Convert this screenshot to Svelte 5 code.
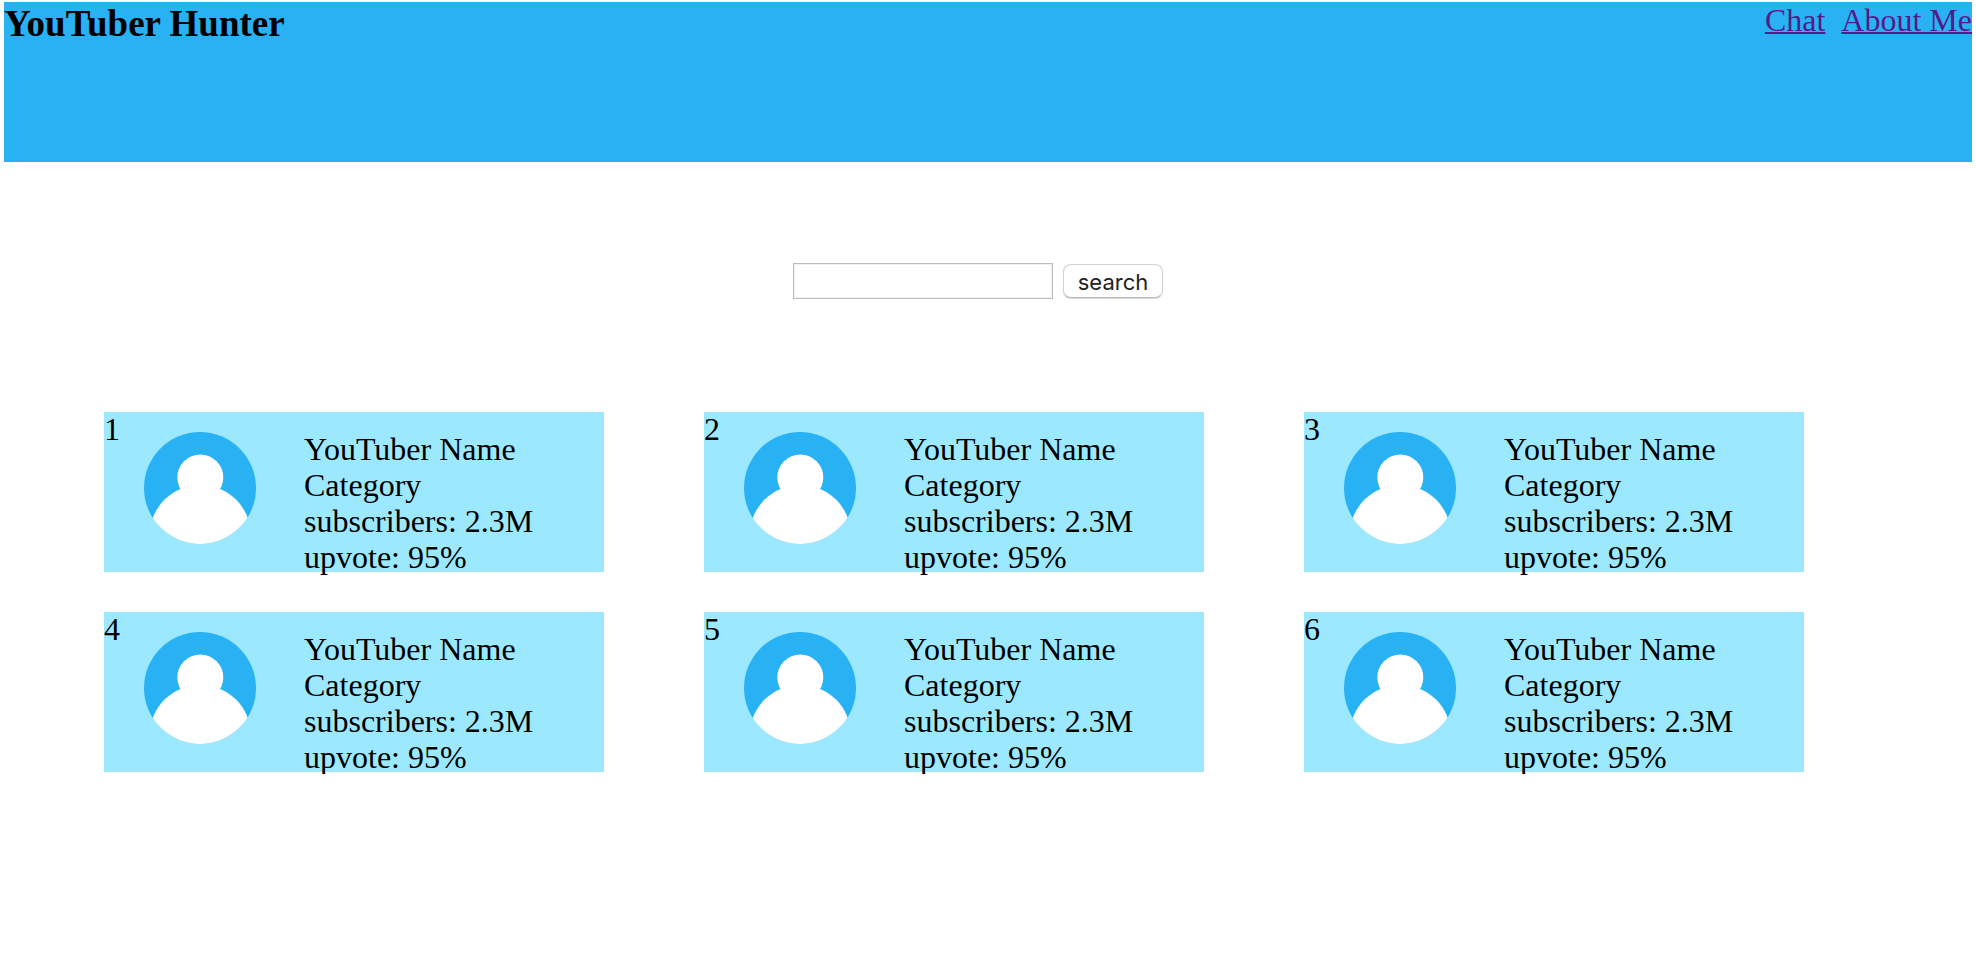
<script>
  let query = $state('');

  const youtubers = [1, 2, 3, 4, 5, 6].map((rank) => ({
    rank,
    name: 'YouTuber Name',
    category: 'Category',
    subscribers: '2.3M',
    upvote: '95%'
  }));
</script>

<header class="banner">
  <h1>YouTuber Hunter</h1>
  <nav>
    <a href="#chat">Chat</a>
    <a href="#about">About Me</a>
  </nav>
</header>

<main>
  <form class="search" onsubmit={(event) => event.preventDefault()}>
    <input type="text" aria-label="search" bind:value={query} />
    <button type="submit">search</button>
  </form>

  <ol class="cards">
    {#each youtubers as person (person.rank)}
      <li class="card">
        <span class="rank">{person.rank}</span>
        <svg class="avatar" viewBox="0 0 112 112" aria-hidden="true">
          <clipPath id="disc-{person.rank}">
            <circle cx="56" cy="56" r="56" />
          </clipPath>
          <g clip-path="url(#disc-{person.rank})">
            <rect width="112" height="112" fill="#29b2f3" />
            <circle cx="56.3" cy="45.4" r="23" fill="#fff" />
            <circle cx="56.3" cy="103.4" r="50.6" fill="#fff" />
          </g>
        </svg>
        <div class="details">
          <div>{person.name}</div>
          <div>{person.category}</div>
          <div>subscribers: {person.subscribers}</div>
          <div>upvote: {person.upvote}</div>
        </div>
      </li>
    {/each}
  </ol>
</main>

<style>
  :global(body) {
    margin: 0;
    padding: 2px 4px;
    background: #fff;
    color: #000;
    font-family: 'Liberation Serif', 'Times New Roman', serif;
    font-size: 32px;
    line-height: 36px;
  }

  .banner {
    display: flex;
    justify-content: space-between;
    align-items: flex-start;
    min-height: 160px;
    background: #29b2f3;
  }

  h1 {
    margin: 0;
    font-size: 37px;
    line-height: 44px;
    font-weight: bold;
  }

  nav {
    display: flex;
    gap: 16px;
  }

  nav a {
    color: #551a8b;
    text-decoration-thickness: 2px;
  }

  .search {
    display: flex;
    justify-content: center;
    align-items: center;
    gap: 10px;
    padding: 101px 20px 113px 0;
  }

  input {
    box-sizing: border-box;
    width: 260px;
    height: 36px;
    padding: 2px 6px;
    border: 1px solid #bdbdbd;
    border-radius: 0;
    box-shadow: inset 0 0 1px 1px #f0f0f0;
    background: #fff;
    font: 22px/28px Inter, sans-serif;
  }

  button {
    box-sizing: border-box;
    height: 34px;
    padding: 2px 14px 0;
    border: 1px solid #d2d2d2;
    border-bottom-color: #b8b8b8;
    border-radius: 8px;
    box-shadow: 0 1px 1px #d8d8d8;
    background: #fff;
    color: #222;
    font: 22px/30px Inter, sans-serif;
  }

  .cards {
    display: grid;
    grid-template-columns: repeat(auto-fill, minmax(440px, 1fr));
    gap: 40px 100px;
    margin: 0;
    padding: 0 168px 0 100px;
    list-style: none;
  }

  .card {
    display: flex;
    align-items: flex-start;
    height: 160px;
    background: #9ce9ff;
  }

  .rank {
    width: 40px;
    line-height: 34px;
  }

  .avatar {
    flex: none;
    width: 112px;
    height: 112px;
    margin: 20px 48px 0 0;
  }

  .details {
    padding-top: 19px;
    white-space: nowrap;
  }
</style>
